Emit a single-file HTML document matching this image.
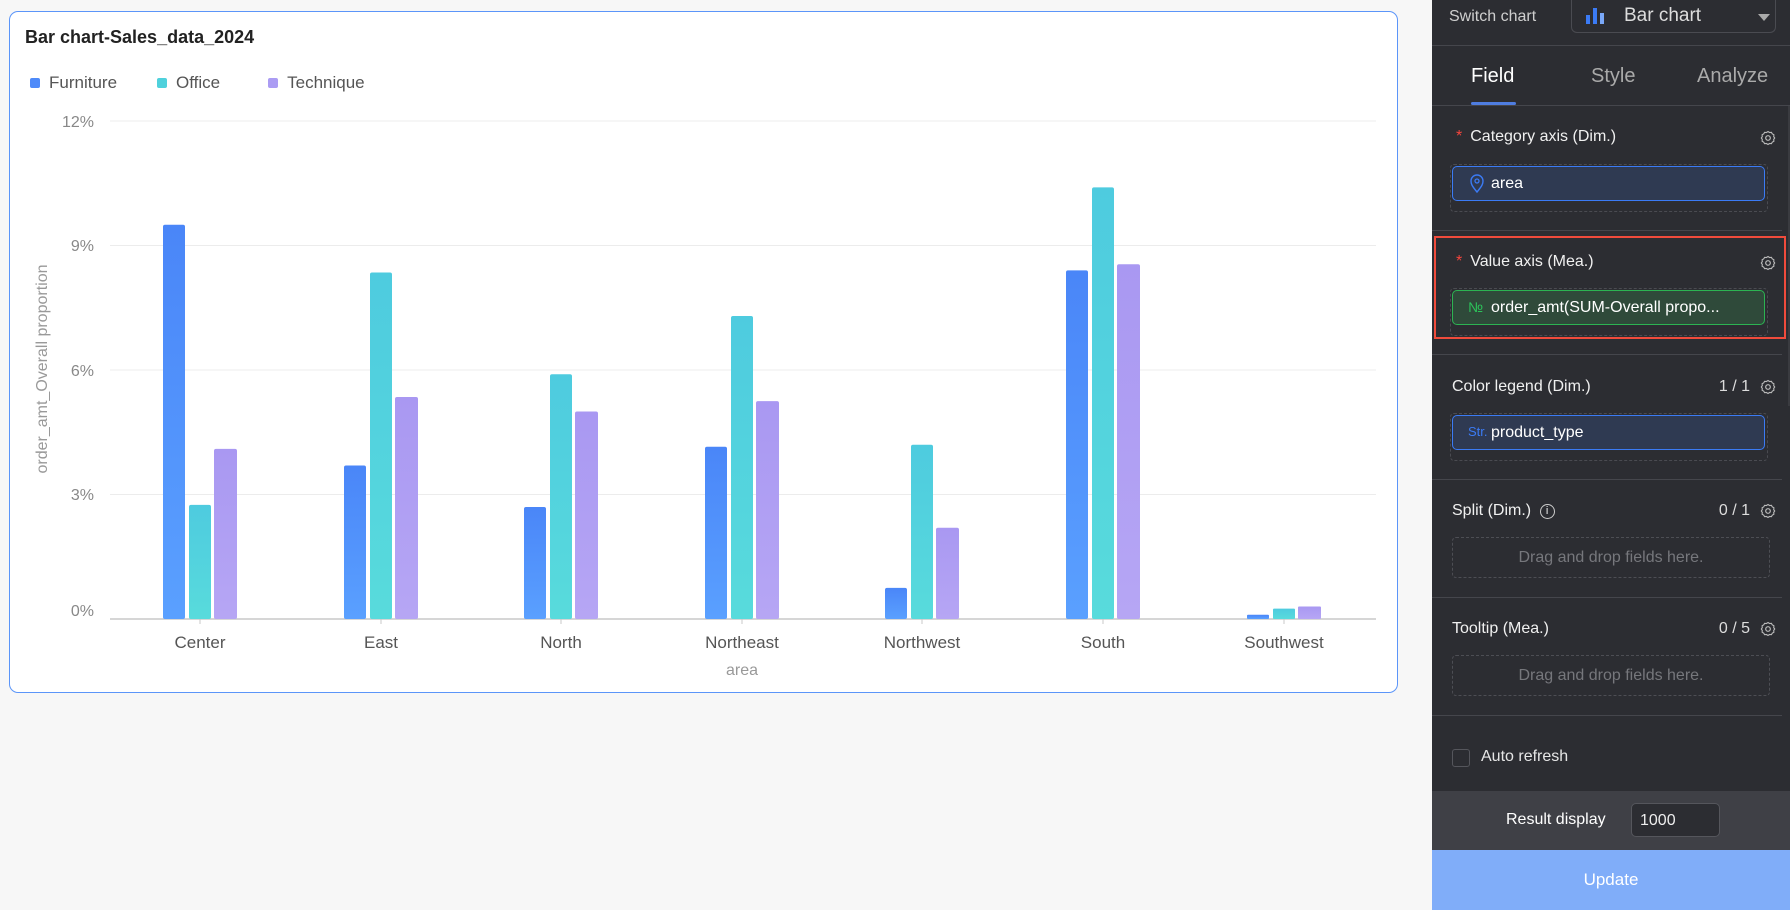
<!DOCTYPE html>
<html><head><meta charset="utf-8"><style>
*{box-sizing:border-box;margin:0;padding:0}
body{width:1790px;height:910px;background:#f7f7f7;font-family:"Liberation Sans",sans-serif;position:relative;overflow:hidden}
.card{position:absolute;left:9px;top:11px;width:1389px;height:682px;background:#fff;border:1.5px solid #5b95f9;border-radius:9px}
.panel{position:absolute;left:1432px;top:0;width:358px;height:910px;background:#2c2d32;color:#e6e6e6}
.abs{position:absolute}
.lbl{position:absolute;font-size:16px;color:#f0f0f0}
.star{color:#f5453d;margin-right:8px}
.div{position:absolute;left:0;width:350px;height:1px;background:#45464c}
.dash{position:absolute;left:18px;width:318px;border:1px dashed #4a4b51;border-radius:4px}
.pill{position:absolute;left:20px;width:313px;height:35px;border:1.5px solid #3b7bf5;background:#2f3a52;border-radius:5px;font-size:16px;color:#fff;padding-left:38px;line-height:33px}
.drop{position:absolute;left:20px;width:318px;height:41px;border:1px dashed #4d4e54;border-radius:4px;color:#76777c;font-size:16px;text-align:center;line-height:39px}
.cnt{position:absolute;right:40px;font-size:16px;color:#ddd}
.gear{position:absolute;right:14px;width:16px;height:16px}
</style></head><body>
<div class="card">
<div class="abs" style="left:15px;top:15px;font-size:18px;font-weight:bold;color:#222">Bar chart-Sales_data_2024</div>
<div class="abs" style="left:20px;top:61px;font-size:17px;color:#555;display:flex;align-items:center">
<span style="width:10px;height:10px;background:#4e8af9;border-radius:2px;margin-right:9px"></span>Furniture
<span style="width:10px;height:10px;background:#4fd1dc;border-radius:2px;margin:0 9px 0 40px"></span>Office
<span style="width:10px;height:10px;background:#ab9cf3;border-radius:2px;margin:0 9px 0 48px"></span>Technique</div>
</div>
<svg class="abs" style="left:0;top:0" width="1420" height="700" font-family="Liberation Sans, sans-serif">
<defs>
<linearGradient id="b" x1="0" y1="0" x2="0" y2="1"><stop offset="0" stop-color="#4a86f8"/><stop offset="1" stop-color="#5aa0ff"/></linearGradient>
<linearGradient id="c" x1="0" y1="0" x2="0" y2="1"><stop offset="0" stop-color="#4ecbdf"/><stop offset="1" stop-color="#58dbdc"/></linearGradient>
<linearGradient id="p" x1="0" y1="0" x2="0" y2="1"><stop offset="0" stop-color="#a998f2"/><stop offset="1" stop-color="#b6a6f4"/></linearGradient>
</defs>
<g stroke="#ececec" stroke-width="1">
<line x1="110" y1="121" x2="1376" y2="121"/><line x1="110" y1="245.5" x2="1376" y2="245.5"/><line x1="110" y1="370" x2="1376" y2="370"/><line x1="110" y1="494.5" x2="1376" y2="494.5"/></g>
<g fill="#888" font-size="16" text-anchor="end">
<text x="94" y="127">12%</text><text x="94" y="251">9%</text><text x="94" y="376">6%</text><text x="94" y="500">3%</text><text x="94" y="616">0%</text></g>
<text transform="translate(47,369) rotate(-90)" text-anchor="middle" fill="#999" font-size="16">order_amt_Overall proportion</text>
<line x1="110" y1="619" x2="1376" y2="619" stroke="#c8c8c8" stroke-width="1.5"/>
<g stroke="#c8c8c8"><line x1="200" y1="619" x2="200" y2="624"/><line x1="381" y1="619" x2="381" y2="624"/><line x1="561" y1="619" x2="561" y2="624"/><line x1="742" y1="619" x2="742" y2="624"/><line x1="922" y1="619" x2="922" y2="624"/><line x1="1103" y1="619" x2="1103" y2="624"/><line x1="1284" y1="619" x2="1284" y2="624"/></g>
<g fill="#555" font-size="17" text-anchor="middle">
<text x="200" y="648">Center</text><text x="381" y="648">East</text><text x="561" y="648">North</text><text x="742" y="648">Northeast</text><text x="922" y="648">Northwest</text><text x="1103" y="648">South</text><text x="1284" y="648">Southwest</text></g>
<text x="742" y="675" fill="#999" font-size="16" text-anchor="middle">area</text>
<g>
<rect x="163" y="224.8" width="22" height="394.2" rx="2" fill="url(#b)"/><rect x="189" y="504.9" width="22" height="114.1" rx="2" fill="url(#c)"/><rect x="214" y="448.9" width="23" height="170.1" rx="2" fill="url(#p)"/>
<rect x="344" y="465.5" width="22" height="153.5" rx="2" fill="url(#b)"/><rect x="370" y="272.5" width="22" height="346.5" rx="2" fill="url(#c)"/><rect x="395" y="397" width="23" height="222" rx="2" fill="url(#p)"/>
<rect x="524" y="507" width="22" height="112" rx="2" fill="url(#b)"/><rect x="550" y="374.2" width="22" height="244.8" rx="2" fill="url(#c)"/><rect x="575" y="411.5" width="23" height="207.5" rx="2" fill="url(#p)"/>
<rect x="705" y="446.8" width="22" height="172.2" rx="2" fill="url(#b)"/><rect x="731" y="316" width="22" height="303" rx="2" fill="url(#c)"/><rect x="756" y="401.1" width="23" height="217.9" rx="2" fill="url(#p)"/>
<rect x="885" y="587.9" width="22" height="31.1" rx="2" fill="url(#b)"/><rect x="911" y="444.7" width="22" height="174.3" rx="2" fill="url(#c)"/><rect x="936" y="527.7" width="23" height="91.3" rx="2" fill="url(#p)"/>
<rect x="1066" y="270.4" width="22" height="348.6" rx="2" fill="url(#b)"/><rect x="1092" y="187.4" width="22" height="431.6" rx="2" fill="url(#c)"/><rect x="1117" y="264.2" width="23" height="354.8" rx="2" fill="url(#p)"/>
<rect x="1247" y="614.8" width="22" height="4.2" rx="1" fill="url(#b)"/><rect x="1273" y="608.6" width="22" height="10.4" rx="1" fill="url(#c)"/><rect x="1298" y="606.5" width="23" height="12.5" rx="1" fill="url(#p)"/>
</g>
</svg>

<div class="panel">
<div class="lbl" style="left:17px;top:8px;color:#cfcfcf">Switch chart</div>
<div class="abs" style="left:139px;top:0;width:205px;height:33px;border:1px solid #4a4b51;border-top:none;border-radius:0 0 6px 6px"></div>
<svg class="abs" style="left:153px;top:7px" width="22" height="18"><rect x="1" y="8" width="4" height="9" fill="#3b7bf5"/><rect x="8" y="1" width="4" height="16" fill="#3b7bf5"/><rect x="15" y="6" width="4" height="11" fill="#7aa8f8"/></svg>
<div class="abs" style="left:192px;top:5px;font-size:19px;color:#ddd">Bar chart</div>
<div class="abs" style="left:326px;top:14px;width:0;height:0;border-left:6px solid transparent;border-right:6px solid transparent;border-top:7px solid #aaa"></div>
<div class="div" style="top:45px;width:358px"></div>
<div class="abs" style="left:39px;top:65px;font-size:20px;color:#fff">Field</div>
<div class="abs" style="left:159px;top:65px;font-size:20px;color:#aaa">Style</div>
<div class="abs" style="left:265px;top:65px;font-size:20px;color:#aaa">Analyze</div>
<div class="abs" style="left:39px;top:102px;width:45px;height:3px;background:#4f7de0;border-radius:2px"></div>
<div class="div" style="top:105px;width:358px"></div>
<div class="abs" style="left:356px;top:106px;width:2px;height:300px;background:#3a3b40"></div>

<div class="lbl" style="left:24px;top:128px"><span class="star">*</span>Category axis (Dim.)</div>
<svg class="gear" style="top:130px" viewBox="0 0 16 16"><circle cx="8" cy="8" r="2.3" fill="none" stroke="#bbb" stroke-width="1.2"/><path d="M8 1.5l1.6 1 1.8-.2.9 1.6 1.6.9-.2 1.8 1 1.4-1 1.4.2 1.8-1.6.9-.9 1.6-1.8-.2L8 14.5l-1.6-1-1.8.2-.9-1.6-1.6-.9.2-1.8-1-1.4 1-1.4-.2-1.8 1.6-.9.9-1.6 1.8.2z" fill="none" stroke="#bbb" stroke-width="1.1"/></svg>
<div class="dash" style="top:164px;height:48px"></div>
<div class="pill" style="top:166px">area</div>
<svg class="abs" style="left:37px;top:174px" width="16" height="20"><path d="M8 18C3 12 2 10 2 7a6 6 0 0 1 12 0c0 3-1 5-6 11z" fill="none" stroke="#3b7bf5" stroke-width="1.4"/><circle cx="8" cy="7" r="2" fill="none" stroke="#3b7bf5" stroke-width="1.3"/></svg>
<div class="div" style="top:230px"></div>

<div class="abs" style="left:2px;top:236px;width:352px;height:103px;border:2.5px solid #f04b3c"></div>
<div class="lbl" style="left:24px;top:253px"><span class="star">*</span>Value axis (Mea.)</div>
<svg class="gear" style="top:255px" viewBox="0 0 16 16"><circle cx="8" cy="8" r="2.3" fill="none" stroke="#bbb" stroke-width="1.2"/><path d="M8 1.5l1.6 1 1.8-.2.9 1.6 1.6.9-.2 1.8 1 1.4-1 1.4.2 1.8-1.6.9-.9 1.6-1.8-.2L8 14.5l-1.6-1-1.8.2-.9-1.6-1.6-.9.2-1.8-1-1.4 1-1.4-.2-1.8 1.6-.9.9-1.6 1.8.2z" fill="none" stroke="#bbb" stroke-width="1.1"/></svg>
<div class="dash" style="top:288px;height:48px"></div>
<div class="pill" style="top:290px;border-color:#2cb352;background:#2f4a3a;white-space:nowrap;overflow:hidden">order_amt(SUM-Overall propo...</div>
<div class="abs" style="left:36px;top:299px;font-size:14px;color:#2cc35a">№</div>
<div class="div" style="top:354px"></div>

<div class="lbl" style="left:20px;top:378px">Color legend (Dim.)</div>
<div class="cnt" style="top:378px">1 / 1</div>
<svg class="gear" style="top:379px" viewBox="0 0 16 16"><circle cx="8" cy="8" r="2.3" fill="none" stroke="#bbb" stroke-width="1.2"/><path d="M8 1.5l1.6 1 1.8-.2.9 1.6 1.6.9-.2 1.8 1 1.4-1 1.4.2 1.8-1.6.9-.9 1.6-1.8-.2L8 14.5l-1.6-1-1.8.2-.9-1.6-1.6-.9.2-1.8-1-1.4 1-1.4-.2-1.8 1.6-.9.9-1.6 1.8.2z" fill="none" stroke="#bbb" stroke-width="1.1"/></svg>
<div class="dash" style="top:413px;height:48px"></div>
<div class="pill" style="top:415px">product_type</div>
<div class="abs" style="left:36px;top:424px;font-size:13px;color:#3b7bf5">Str.</div>
<div class="div" style="top:479px"></div>

<div class="lbl" style="left:20px;top:502px">Split (Dim.) <span style="display:inline-block;width:15px;height:15px;border:1.3px solid #ccc;border-radius:50%;font-size:11px;text-align:center;line-height:13px;vertical-align:1px;margin-left:4px">i</span></div>
<div class="cnt" style="top:502px">0 / 1</div>
<svg class="gear" style="top:503px" viewBox="0 0 16 16"><circle cx="8" cy="8" r="2.3" fill="none" stroke="#bbb" stroke-width="1.2"/><path d="M8 1.5l1.6 1 1.8-.2.9 1.6 1.6.9-.2 1.8 1 1.4-1 1.4.2 1.8-1.6.9-.9 1.6-1.8-.2L8 14.5l-1.6-1-1.8.2-.9-1.6-1.6-.9.2-1.8-1-1.4 1-1.4-.2-1.8 1.6-.9.9-1.6 1.8.2z" fill="none" stroke="#bbb" stroke-width="1.1"/></svg>
<div class="drop" style="top:537px">Drag and drop fields here.</div>
<div class="div" style="top:597px"></div>

<div class="lbl" style="left:20px;top:620px">Tooltip (Mea.)</div>
<div class="cnt" style="top:620px">0 / 5</div>
<svg class="gear" style="top:621px" viewBox="0 0 16 16"><circle cx="8" cy="8" r="2.3" fill="none" stroke="#bbb" stroke-width="1.2"/><path d="M8 1.5l1.6 1 1.8-.2.9 1.6 1.6.9-.2 1.8 1 1.4-1 1.4.2 1.8-1.6.9-.9 1.6-1.8-.2L8 14.5l-1.6-1-1.8.2-.9-1.6-1.6-.9.2-1.8-1-1.4 1-1.4-.2-1.8 1.6-.9.9-1.6 1.8.2z" fill="none" stroke="#bbb" stroke-width="1.1"/></svg>
<div class="drop" style="top:655px">Drag and drop fields here.</div>
<div class="div" style="top:715px"></div>

<div class="abs" style="left:20px;top:749px;width:18px;height:18px;border:1.3px solid #55565c;border-radius:3px"></div>
<div class="lbl" style="left:49px;top:748px;color:#e6e6e6">Auto refresh</div>

<div class="abs" style="left:0;top:791px;width:358px;height:59px;background:#3f4046"></div>
<div class="lbl" style="left:74px;top:811px;color:#fff">Result display</div>
<div class="abs" style="left:199px;top:803px;width:89px;height:34px;background:#2c2d32;border:1px solid #55565c;border-radius:5px;color:#eee;font-size:16px;padding:8px 0 0 8px">1000</div>
<div class="abs" style="left:0;top:850px;width:358px;height:60px;background:#80adf9;color:#fff;font-size:17px;text-align:center;line-height:60px">Update</div>
</div>
</body></html>
